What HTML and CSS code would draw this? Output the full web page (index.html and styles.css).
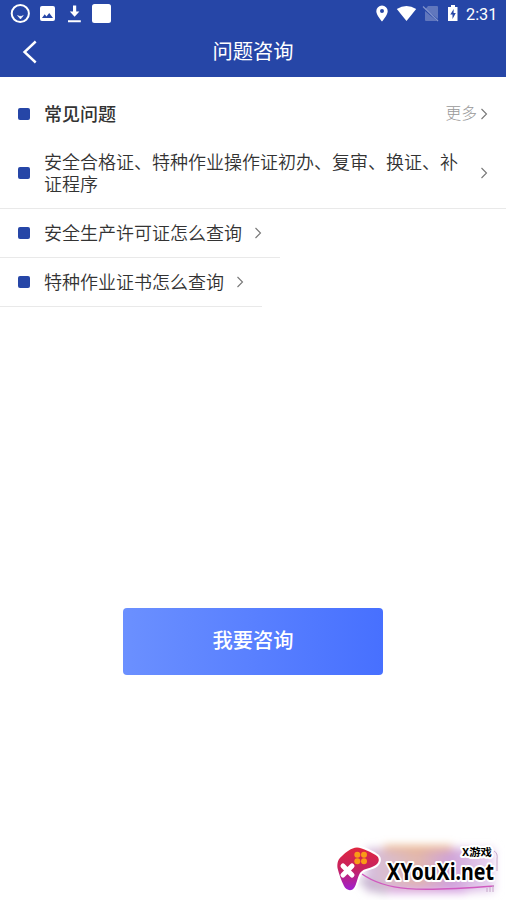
FILE: index.html
```
<!DOCTYPE html>
<html lang="zh-CN">
<head>
<meta charset="utf-8">
<title>问题咨询</title>
<link rel="stylesheet" href="styles.css">
</head>
<body>
<header class="header">
  <div class="status">
    <svg class="status-left" width="120" height="27" viewBox="0 0 120 27">
      <circle cx="20.3" cy="13.5" r="8.600" fill="none" stroke="#fff" stroke-width="2"/>
      <path d="M17.500 15.500l2 .8h2l1.800-.8-2.800 3.500z" fill="#fff" stroke="#fff" stroke-width=".5"/>
      <path fill-rule="evenodd" fill="#fff" d="M42 6h11q2 0 2 2v11q0 2-2 2H42q-2 0-2-2V8q0-2 2-2zM42 18h11l-3.800-5-2.700 3.400-1.800-2.200z"/>
      <path d="M73 5.500h3.200v6h3.200l-4.800 5.200-4.800-5.200H73zM68 20.300h12.800v1.900H68z" fill="#fff"/>
      <rect x="92" y="4" width="19" height="19" rx="2.500" fill="#fff"/>
    </svg>
    <div class="status-right">
      <svg width="88" height="27" viewBox="0 0 88 27">
        <path fill-rule="evenodd" fill="#fff" d="M10 5.500a5.700 5.700 0 0 1 5.700 5.700C15.700 15 10 21.500 10 21.500S4.300 15 4.300 11.200A5.700 5.700 0 0 1 10 5.500zm0 3.500a2 2 0 1 0 0 4 2 2 0 0 0 0-4z"/>
        <path d="M24.800 9Q34.500 3 44.200 9L34.500 21z" fill="#fff"/>
        <path d="M56 6h9q1 0 1 1v12L53.500 9zM53 11l12 10H54q-1 0-1-1z" fill="#6177bd"/>
        <path d="M51 6.500l15 14.500" stroke="#8294cc" stroke-width="1.300"/>
        <path d="M79 5h4v2h2.500v14h-9.500V7h3z" fill="#fff"/>
        <path d="M81.700 9l-3.400 5.500h2.200V19l3.300-6h-2.200z" fill="#2646a7"/>
      </svg>
      <span class="clock">2:31</span>
    </div>
  </div>
  <nav class="nav">
    <svg class="back" width="16" height="24" viewBox="0 0 16 24"><path d="M13.700 1.500L2.500 12l11.200 10.500" fill="none" stroke="#fff" stroke-width="2.400"/></svg>
    <h1 class="title">问题咨询</h1>
  </nav>
</header>
<main class="main">
  <section class="list">
    <div class="row row-head">
      <i class="dot"></i><h2 class="heading">常见问题</h2>
      <span class="more">更多</span>
      <svg class="arrow" width="8" height="12" viewBox="0 0 8 12"><path d="M1.500 1l5 5-5 5"/></svg>
    </div>
    <div class="row row-long">
      <i class="dot"></i><span class="text">安全合格证、特种作业操作证初办、复审、换证、补证程序</span>
      <svg class="arrow" width="8" height="12" viewBox="0 0 8 12"><path d="M1.500 1l5 5-5 5"/></svg>
    </div>
    <div class="row row-short">
      <i class="dot"></i><span class="text">安全生产许可证怎么查询</span>
      <svg class="arrow" width="8" height="12" viewBox="0 0 8 12"><path d="M1.500 1l5 5-5 5"/></svg>
    </div>
    <div class="row row-short">
      <i class="dot"></i><span class="text">特种作业证书怎么查询</span>
      <svg class="arrow" width="8" height="12" viewBox="0 0 8 12"><path d="M1.500 1l5 5-5 5"/></svg>
    </div>
  </section>
  <button class="ask">我要咨询</button>
</main>
<svg class="watermark" width="180" height="70" viewBox="0 0 180 70">
  <defs>
    <linearGradient id="pad" x1="0" y1="0" x2="0" y2="1"><stop offset="0" stop-color="#df273f"/><stop offset=".5" stop-color="#c7225f"/><stop offset="1" stop-color="#9f20d0"/></linearGradient>
    <linearGradient id="glow" x1="0" y1="0" x2="1" y2="0"><stop offset="0" stop-color="#d5bfe2"/><stop offset=".4" stop-color="#e2b8ad"/><stop offset=".65" stop-color="#cfa3d8"/><stop offset="1" stop-color="#e9d8f2"/></linearGradient>
    <filter id="soft" x="-20%" y="-30%" width="140%" height="160%"><feGaussianBlur stdDeviation="4"/></filter>
  </defs>
  <g filter="url(#soft)">
    <rect x="40" y="18" width="129" height="44" fill="url(#glow)"/>
    <path d="M58 18h68" stroke="#e9b184" stroke-width="5"/>
    <path d="M62 60h78" stroke="#d6a0e2" stroke-width="6"/>
    <path d="M34 50l26 12" stroke="#c5b5cf" stroke-width="7"/>
  </g>
  <path d="M36 44C60 61 90 62 168 56" fill="none" stroke="#d05abf" stroke-width="1.500"/>
  <path d="M168 21q4 2 3 8v12M161 58v4m3-5v5m3-7v7" fill="none" stroke="#c6a6c9" stroke-width="1"/>
  <path d="M16 26C20 22 25 18 31 17.500C36 17.500 47 23 51 26C55 30 52 35 46 37C41 39 37 39 34 43C31 48 31 54 28 58C25 62 20 60 18 56C15 50 13 44 11.500 38C11 33 12 29 16 26z" fill="url(#pad)" stroke="#fff" stroke-width="4" paint-order="stroke" stroke-linejoin="round"/>
  <path d="M17 36l9 9m0-9l-9 9" stroke="#fff" stroke-width="5" stroke-linecap="round"/>
  <g fill="#f99b16"><circle cx="31.300" cy="24.800" r="3"/><circle cx="38" cy="24.800" r="3"/><circle cx="31.300" cy="31.300" r="3"/><circle cx="38" cy="31.300" r="3"/></g>
  <text class="wm-small" x="136" y="26" textLength="30" lengthAdjust="spacingAndGlyphs">X游戏</text>
  <text class="wm-big" x="61" y="49.500" textLength="107" lengthAdjust="spacingAndGlyphs">XYouXi.net</text>
</svg>
</body>
</html>
```
FILE: styles.css
```
* { box-sizing: border-box; }
body {
  margin: 0;
  height: 900px;
  overflow: hidden;
  background: #fff;
  color: #333;
  font-family: "Noto Sans CJK SC", sans-serif;
}
.header { height: 77px; background: #2646a7; color: #fff; }
.status { display: flex; justify-content: space-between; height: 27px; }
.status-right { display: flex; width: 134px; }
.clock { margin-left: 6px; font: 400 16.3px/29px Roboto, sans-serif; white-space: nowrap; }
.nav { display: flex; align-items: center; height: 49px; padding: 0 22px; }
.back { flex: none; }
.title { flex: 1; margin: 0 16px 0 0; padding-bottom: 2px; text-align: center; font-size: 20.25px; font-weight: 400; line-height: 30px; }
.main { display: flex; flex-direction: column; align-items: center; }
.list { width: 100%; padding-top: 14px; }
.row { display: flex; align-items: center; padding: 0 18px; }
.row-head { height: 46px; }
.row-long { height: 72px; border-bottom: 1px solid #e9e9e9; }
.row-short { width: fit-content; height: 49px; border-bottom: 1px solid #e9e9e9; }
.dot { flex: none; width: 12px; height: 12px; margin-right: 14px; border-radius: 2px; background: #2646a7; }
.heading { flex: 1; margin: 0; padding-bottom: 2px; font-size: 18px; font-weight: 500; line-height: 26px; }
.more { margin-right: 3px; padding-bottom: 3px; color: #999; font-size: 15.75px; font-weight: 300; }
.text { padding-bottom: 2px; font-size: 18px; font-weight: 350; line-height: 22px; }
.row-long .text { flex: 1; margin-right: 18px; }
.row-short .text { margin-right: 12px; }
.arrow { flex: none; fill: none; stroke: #777; stroke-width: 1.1; }
.ask {
  width: 260px;
  height: 67px;
  margin-top: 301px;
  padding: 0 0 4px;
  border: 0;
  border-radius: 4px;
  background: linear-gradient(90deg, #6b90ff, #4770ff);
  color: #fff;
  font: 500 20.25px/30px "Noto Sans CJK SC", sans-serif;
}
.watermark { position: absolute; right: 0; bottom: 0; }
.wm-small, .wm-big { fill: #000; stroke: #fff; stroke-width: 4px; stroke-linejoin: round; paint-order: stroke; font-weight: 700; }
.wm-small { font-family: "Noto Sans CJK SC", sans-serif; font-size: 10.5px; }
.wm-big { font-family: "Noto Sans", sans-serif; font-size: 22.5px; }
```
